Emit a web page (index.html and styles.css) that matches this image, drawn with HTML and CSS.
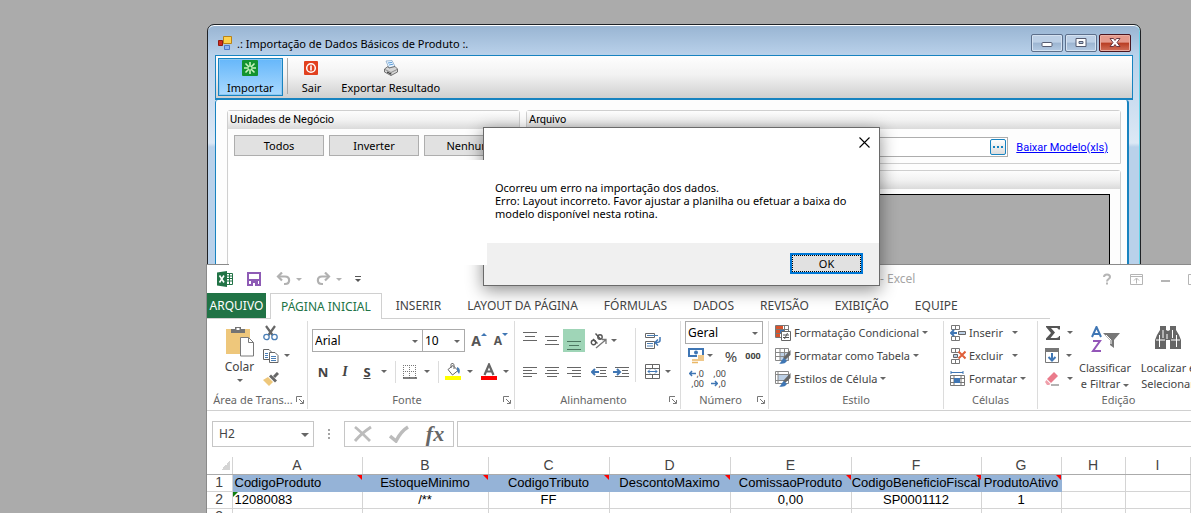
FILE: index.html
```html
<!DOCTYPE html>
<html lang="pt-BR">
<head>
<meta charset="utf-8">
<title>Importação de Dados Básicos de Produto</title>
<link rel="stylesheet" href="styles.css">
</head>
<body>
<main class="desktop">

  <section class="importer">
    <header class="titlebar">
      <svg width="14" height="14" viewBox="0 0 14 14"><path d="M5.500.5h8v7h-8z" fill="#ffd34e" stroke="#b98216"/><path d="M.5 4.500h4v5h-4z" fill="#d02a1c" stroke="#8e1b12"/><path d="M6.500 9.500h5v4h-5z" fill="#8fb4f3" stroke="#4d77c9"/></svg>
      <h1 class="title">.: Importação de Dados Básicos de Produto :.</h1>
      <div class="win-buttons">
        <button class="win-btn" aria-label="Minimizar"><svg width="12" height="10" viewBox="0 0 12 10"><rect x="1" y="4.500" width="10" height="4" rx="1" fill="#fff" stroke="#555b70"/></svg></button>
        <button class="win-btn" aria-label="Maximizar"><svg width="12" height="10" viewBox="0 0 12 10"><path d="M1 .5h10v8H1z" fill="#fff" stroke="#555b70"/><path d="M4 3.500h4v2H4z" fill="#aec3dd" stroke="#555b70"/></svg></button>
        <button class="win-btn win-close" aria-label="Fechar"><svg width="12" height="10" viewBox="0 0 12 10"><path d="M1 .5h3.500L6 2.500 7.500.5H11L8 4.500l3 4H7.500L6 6.500l-1.500 2H1l3-4z" fill="#fff" stroke="#5c2a35" stroke-width=".9"/></svg></button>
      </div>
    </header>
    <nav class="toolbar">
      <button class="tool tool-active"><svg width="16" height="16" viewBox="0 0 16 16"><rect width="16" height="16" rx="1" fill="#12932f"/><path d="M8 2v12M2 8h12M3.500 3.500l9 9M12.500 3.500l-9 9" stroke="#c9f5bd" stroke-width="1.600"/><circle cx="8" cy="8" r="1.500" fill="#12932f"/></svg>Importar</button>
      <span class="tool-sep"></span>
      <button class="tool"><svg width="16" height="16" viewBox="0 0 16 16"><rect x="1" y="1" width="14" height="14" rx="1" fill="#e2411f"/><circle cx="8" cy="8" r="4.300" fill="none" stroke="#fff" stroke-width="1.500"/><path d="M8 5.500v5" stroke="#fff" stroke-width="1.600"/></svg>Sair</button>
      <button class="tool"><svg width="16" height="16" viewBox="0 0 16 16"><path d="M3 1l6-.5 3 6-6 1.500z" fill="#e8f4ff" stroke="#8aa9c8" stroke-width=".8"/><path d="M5 3l4-.6M6 5l4-.8" stroke="#5fa0db"/><path d="M1.500 9L5 6.500l1 1.500 6-1.500 2.500 2.500v3L8 15.500 1.500 12z" fill="#d6d6d6" stroke="#666" stroke-width=".9"/><path d="M2 9.500l6 3 6-3M8 12.500v3" fill="none" stroke="#777" stroke-width=".8"/><path d="M4 12l4 2" stroke="#222"/></svg>Exportar Resultado</button>
    </nav>
    <div class="panel">
      <section class="box units">
        <h2 class="box-title">Unidades de Negócio</h2>
        <div class="unit-buttons"><button class="btn">Todos</button><button class="btn">Inverter</button><button class="btn">Nenhum</button></div>
      </section>
      <div class="right-col">
        <section class="box">
          <h2 class="box-title"><label for="file">Arquivo</label></h2>
          <div class="file-row">
            <div class="file-field"><input id="file" type="text"><button class="browse" aria-label="Procurar"><i></i><i></i><i></i></button></div>
            <a class="link" href="#">Baixar Modelo(xls)</a>
          </div>
        </section>
        <section class="box results">
          <h2 class="box-title"></h2>
          <div class="result-area"></div>
        </section>
      </div>
    </div>
  </section>

  <section class="excel">
    <header class="quick">
      <svg width="16" height="16" viewBox="0 0 16 16"><path d="M9 2.500h6.500v11H9z" fill="#fff" stroke="#217346"/><path d="M10 5h5M10 7.500h5M10 10h5M12.500 3v10" stroke="#217346"/><path d="M0 1.500L10 0v16L0 14.500z" fill="#217346"/><path d="M2.500 4.500l4.500 7M7 4.500l-4.500 7" stroke="#fff" stroke-width="1.600"/></svg>
      <svg class="save" width="14" height="14" viewBox="0 0 14 14"><path d="M1 1h12v12H1z" fill="#fff" stroke="#8e5bb5" stroke-width="2"/><path d="M1 7h12v2H1zM4 9h7v4H4z" fill="#8e5bb5"/><path d="M6 11h2v3H6z" fill="#fff"/></svg>
      <svg class="undo" width="15" height="14" viewBox="0 0 15 14"><path d="M2 4.500h7c5.500 0 5.500 7.500 0 7.500H8" fill="none" stroke="#b1b1b1" stroke-width="2.200"/><path d="M6 .5l-4 4 4 4" fill="none" stroke="#b1b1b1" stroke-width="2.200"/></svg>
      <i class="caret pale"></i>
      <svg class="redo" width="15" height="14" viewBox="0 0 15 14"><path d="M13 4.500H6c-5.500 0-5.500 7.500 0 7.500h1" fill="none" stroke="#b1b1b1" stroke-width="2.200"/><path d="M9 .5l4 4-4 4" fill="none" stroke="#b1b1b1" stroke-width="2.200"/></svg>
      <i class="caret pale"></i>
      <svg class="more" width="6" height="6" viewBox="0 0 6 6"><path d="M0 .5h6" stroke="#555"/><path d="M0 3h6L3 6z" fill="#555"/></svg>
      <span class="doc-title">- Excel</span>
      <div class="sys">
        <svg width="10" height="12" viewBox="0 0 10 12"><path d="M2 4c0-3.500 6-3.500 6 0 0 2-3 2-3 4.500" fill="none" stroke="#b5b5b5" stroke-width="2"/><path d="M4 9.500h2v2H4z" fill="#b5b5b5"/></svg>
        <svg width="13" height="11" viewBox="0 0 13 11"><path d="M.5.5h12v10H.5zM.5 2.500h12M6.500 9.500v-5M4 6.500L6.500 4 9 6.500" fill="none" stroke="#b5b5b5"/></svg>
        <svg width="9" height="11" viewBox="0 0 9 11"><path d="M0 7h9" stroke="#b5b5b5" stroke-width="2"/></svg>
        <svg width="9" height="11" viewBox="0 0 9 11"><path d="M.5.5h8v10h-8z" fill="none" stroke="#b5b5b5"/></svg>
      </div>
    </header>
    <nav class="tabs">
      <button class="tab-file">ARQUIVO</button><button class="tab tab-on">PÁGINA INICIAL</button><button class="tab">INSERIR</button><button class="tab">LAYOUT DA PÁGINA</button><button class="tab">FÓRMULAS</button><button class="tab">DADOS</button><button class="tab">REVISÃO</button><button class="tab">EXIBIÇÃO</button><button class="tab">EQUIPE</button>
    </nav>

    <div class="ribbon">
      <section class="group g-clip">
        <div class="body">
          <button class="big"><svg width="28" height="31" viewBox="0 0 28 31"><path d="M0 3h24v25H0z" fill="#eec77b"/><path d="M5 3h4V1h6v2h4v4H5z" fill="#737373"/><path d="M10.500 2h3v2h-3z" fill="#fff"/><path d="M14.500 11.500h8l5 5v13.500h-13z" fill="#fff" stroke="#7a7a7a"/><path d="M22.500 11.500v5h5" fill="none" stroke="#7a7a7a"/></svg><span>Colar</span><i class="caret"></i></button>
          <div class="clip-list">
            <button class="ic"><svg width="15" height="16" viewBox="0 0 15 16"><path d="M3 1l6.500 9M12 1L5.500 10" stroke="#666" stroke-width="2.200"/><circle cx="3.500" cy="12" r="2.700" fill="none" stroke="#4a7eb5" stroke-width="1.300"/><circle cx="11.500" cy="12" r="2.700" fill="none" stroke="#4a7eb5" stroke-width="1.300"/></svg></button>
            <button class="ic"><svg width="16" height="14" viewBox="0 0 16 14"><path d="M.5.500H6l3 3v7H.5z" fill="#fff" stroke="#666"/><path d="M2 4.500h3M2 6.500h3M2 8.500h3" stroke="#4a7eb5"/><path d="M6.500 3.500H12l3 3v7H6.500z" fill="#fff" stroke="#666"/><path d="M8 7.500h5M8 9.500h5M8 11.500h5" stroke="#4a7eb5"/></svg><i class="caret"></i></button>
            <button class="ic"><svg width="16" height="14" viewBox="0 0 16 14"><path d="M0 8l5-3 5 5-4 4z" fill="#eec77b"/><path d="M6 4.500l2-2 6 6-2 2z" fill="#666"/><path d="M11 5l4-4" stroke="#666" stroke-width="3"/></svg></button>
          </div>
        </div>
        <footer class="cap"><span>Área de Trans...</span><svg class="launch" width="8" height="8" viewBox="0 0 8 8"><path d="M.5 6V.5H6" fill="none" stroke="#777"/><path d="M3 3l4 4M7.500 4v3.500H4" fill="none" stroke="#777"/></svg></footer>
      </section>

      <section class="group g-font">
        <div class="body rows2">
          <div class="row">
            <span class="pick font-name"><select aria-label="Fonte"><option>Arial</option></select></span><span class="pick font-size"><select aria-label="Tamanho"><option>10</option></select></span>
            <button class="ic grow">A<i class="up"></i></button><button class="ic shrink">A<i class="down"></i></button>
          </div>
          <div class="row letters">
            <button class="ic"><b>N</b></button><button class="ic"><em>I</em></button><button class="ic"><u>S</u></button><i class="caret"></i><span class="vsep"></span>
            <button class="ic"><svg width="14" height="14" viewBox="0 0 14 14"><path d="M.5 0v13M6.500 0v13M12.500 0v13M0 .5h13M0 6.500h13" fill="none" stroke="#777" stroke-dasharray="1 1"/><path d="M0 13h14" stroke="#555" stroke-width="1.500"/></svg></button><i class="caret"></i><span class="vsep"></span>
            <button class="ic"><svg width="16" height="17" viewBox="0 0 16 17"><path d="M3 6.500l5-4 5 5-5.500 4.500z" fill="#fff" stroke="#666"/><path d="M6 5V1.500C6 0 9 0 9 2v4" fill="none" stroke="#666"/><path d="M12 4c3 1 3.500 4 2 7l-2-3z" fill="#4a7eb5"/><path d="M0 13h16v4H0z" fill="#ff0"/></svg></button><i class="caret"></i>
            <button class="ic"><svg width="16" height="17" viewBox="0 0 16 17"><path d="M3.500 12L8 1.500 12.500 12M5 8.500h6" fill="none" stroke="#666" stroke-width="2.200"/><path d="M0 13h16v4H0z" fill="red"/></svg></button><i class="caret"></i>
          </div>
        </div>
        <footer class="cap"><span>Fonte</span><svg class="launch" width="8" height="8" viewBox="0 0 8 8"><path d="M.5 6V.5H6" fill="none" stroke="#777"/><path d="M3 3l4 4M7.500 4v3.500H4" fill="none" stroke="#777"/></svg></footer>
      </section>

      <section class="group g-align">
        <div class="body">
          <div class="rows2">
            <div class="row">
              <button class="ic"><svg width="14" height="20" viewBox="0 0 14 20"><path d="M0 1.500h14M2 5.500h10M0 9.500h14" stroke="#666"/></svg></button>
              <button class="ic"><svg width="14" height="20" viewBox="0 0 14 20"><path d="M0 5.500h14M2 9.500h10M0 13.500h14" stroke="#666"/></svg></button>
              <button class="ic pressed"><svg width="14" height="20" viewBox="0 0 14 20"><path d="M0 10.500h14M2 14.500h10M0 18.500h14" stroke="#4c7660"/></svg></button>
              <button class="ic ab"><svg width="18" height="16" viewBox="0 0 18 16"><circle cx="3.500" cy="9.500" r="2.200" fill="none" stroke="#555" stroke-width="1.400"/><path d="M3 6l4.500 4.500M5.500.5l5 5.500" stroke="#555" stroke-width="1.400"/><circle cx="10" cy="4" r="2.200" fill="none" stroke="#555" stroke-width="1.400"/><path d="M6 15l9.500-8M12 6.500h4V11" fill="none" stroke="#777" stroke-width="1.300"/></svg></button><i class="caret"></i>
            </div>
            <div class="row">
              <button class="ic"><svg width="14" height="12" viewBox="0 0 14 12"><path d="M0 1.500h14M0 4.500h9M0 7.500h14M0 10.500h9" stroke="#666"/></svg></button>
              <button class="ic"><svg width="14" height="12" viewBox="0 0 14 12"><path d="M0 1.500h14M2 4.500h10M0 7.500h14M2 10.500h10" stroke="#666"/></svg></button>
              <button class="ic"><svg width="14" height="12" viewBox="0 0 14 12"><path d="M0 1.500h14M5 4.500h9M0 7.500h14M5 10.500h9" stroke="#666"/></svg></button>
              <button class="ic ab"><svg width="17" height="12" viewBox="0 0 17 12"><path d="M5 1.500h11M9 4.500h6M9 7.500h6M5 10.500h11" stroke="#666"/><path d="M1 6h7M4 3L1 6l3 3" fill="none" stroke="#3f76b4" stroke-width="2"/></svg></button>
              <button class="ic"><svg width="17" height="12" viewBox="0 0 17 12"><path d="M2 1.500h14M9 4.500h6M9 7.500h7M2 10.500h14" stroke="#666"/><path d="M0 6h7M4 3l3 3-3 3" fill="none" stroke="#3f76b4" stroke-width="2"/></svg></button>
            </div>
          </div>
          <span class="vsep tall"></span>
          <div class="rows2">
            <div class="row"><button class="ic"><svg width="16" height="16" viewBox="0 0 16 16"><path d="M.5.5h9v4h-9zM.5 8.500h9v7h-9z" fill="#fff" stroke="#666"/><path d="M2 2.500h11M2 10.500h6M2 13h6" stroke="#4a7eb5"/><path d="M15 4v3.500c0 2-2 2-4 2M13 6.500l-3 3 3 3" fill="none" stroke="#3f76b4" stroke-width="1.500"/></svg></button></div>
            <div class="row"><button class="ic"><svg width="16" height="16" viewBox="0 0 16 16"><path d="M.5.5h14v14H.5zM.5 4.500h14M.5 10.500h14M7.500.5v4M7.500 10.500v4" fill="none" stroke="#666"/><path d="M3 7.500h9M5 5.500l-2 2 2 2M10 5.500l2 2-2 2" fill="none" stroke="#3f76b4"/></svg></button><i class="caret"></i></div>
          </div>
        </div>
        <footer class="cap"><span>Alinhamento</span><svg class="launch" width="8" height="8" viewBox="0 0 8 8"><path d="M.5 6V.5H6" fill="none" stroke="#777"/><path d="M3 3l4 4M7.500 4v3.500H4" fill="none" stroke="#777"/></svg></footer>
      </section>

      <section class="group g-num">
        <div class="body rows3">
          <div class="row"><span class="pick number-format"><select aria-label="Formato de número"><option>Geral</option></select></span></div>
          <div class="row">
            <button class="ic"><svg width="17" height="16" viewBox="0 0 17 16"><path d="M1 1h14v7H1z" fill="#fff" stroke="#3f76b4" stroke-width="2"/><circle cx="8" cy="4.500" r="2" fill="#3f76b4"/><path d="M9 7h8v7H9z" fill="#fff"/><path d="M10 8h6M10 10h6M10 12h6M4 12h6M4 14.500h6" stroke="#eab765" stroke-width="1.500"/></svg></button><i class="caret"></i><button class="ic pct">%</button><button class="ic zeros">000</button>
          </div>
          <div class="row">
            <button class="ic dec"><span><svg width="7" height="7" viewBox="0 0 7 7"><path d="M0 3.500h7M3 1L.8 3.500 3 6" fill="none" stroke="#3f76b4" stroke-width="1.500"/></svg>,0</span><span>,00</span></button>
            <button class="ic dec"><span>,00</span><span><svg width="7" height="7" viewBox="0 0 7 7"><path d="M0 3.500h7M4 1l2.200 2.500L4 6" fill="none" stroke="#3f76b4" stroke-width="1.500"/></svg>,0</span></button>
          </div>
        </div>
        <footer class="cap"><span>Número</span><svg class="launch" width="8" height="8" viewBox="0 0 8 8"><path d="M.5 6V.5H6" fill="none" stroke="#777"/><path d="M3 3l4 4M7.500 4v3.500H4" fill="none" stroke="#777"/></svg></footer>
      </section>

      <section class="group g-style">
        <div class="body rows3">
          <button class="line"><svg width="16" height="16" viewBox="0 0 16 16"><path d="M.5.5h13v12H.5zM.5 4.500h13M.5 8.500h13M9.500.5v12" fill="#fff" stroke="#777"/><path d="M1 1h7v3H1zM1 9h4v3H1z" fill="#d9532c"/><path d="M1 5h4v3H1z" fill="#d9532c"/><path d="M5 5h4v3H5z" fill="#3f76b4"/><path d="M6.500 6.500h9v9h-9z" fill="#fff" stroke="#666"/><path d="M8 10h6M8 12.500h6M12.500 8l-3 6" stroke="#555"/></svg>Formatação Condicional<i class="caret"></i></button>
          <button class="line"><svg width="16" height="16" viewBox="0 0 16 16"><path d="M.5.5h13v12H.5z" fill="#fff"/><path d="M5 4h9v9H5z" fill="#bdd0e6"/><path d="M.5.5h13v12H.5zM.5 4.500h13M.5 8.500h13M5 .5v12M9.500.5v12" fill="none" stroke="#888"/><path d="M15.500 2v5L10 12l-2-2z" fill="#666"/><path d="M9 10l3 3c-2 3-5 3-8 2.500 2-.5 2.500-4 5-5.500z" fill="#3f76b4"/></svg>Formatar como Tabela<i class="caret"></i></button>
          <button class="line"><svg width="16" height="16" viewBox="0 0 16 16"><path d="M.5.5h13v12H.5z" fill="#fff"/><path d="M3 4h10v5H3z" fill="#bdd0e6"/><path d="M.5.5h13v12H.5zM.5 3.500h13M.5 9.500h13M3 .5v12" fill="none" stroke="#888"/><path d="M15.500 2v5L10 12l-2-2z" fill="#666"/><path d="M9 10l3 3c-2 3-5 3-8 2.500 2-.5 2.500-4 5-5.500z" fill="#3f76b4"/></svg>Estilos de Célula<i class="caret"></i></button>
        </div>
        <footer class="cap"><span>Estilo</span></footer>
      </section>

      <section class="group g-cells">
        <div class="body rows3">
          <button class="line wide"><svg width="16" height="16" viewBox="0 0 16 16"><path d="M1.500.5h8v4h-8zM1.500 11.500h8v4h-8zM5.500.5v4M5.500 11.500v4" fill="#fff" stroke="#777"/><path d="M8.500 6.500h7v3h-7z" fill="#bdd0e6" stroke="#666"/><path d="M1 8h6M4 5L1 8l3 3" fill="none" stroke="#3f76b4" stroke-width="2"/></svg>Inserir<i class="caret"></i></button>
          <button class="line wide"><svg width="16" height="16" viewBox="0 0 16 16"><path d="M1.500.5h8v4h-8zM1.500 11.500h8v4h-8zM5.500.5v4M5.500 11.500v4" fill="#fff" stroke="#777"/><path d="M3.500 6.500h4v3h-4z" fill="#bdd0e6" stroke="#666"/><path d="M8.500 3.500l7 7M15.500 3.500l-7 7" stroke="#e0603a" stroke-width="2"/></svg>Excluir<i class="caret"></i></button>
          <button class="line"><svg width="16" height="16" viewBox="0 0 16 16"><path d="M1 1.500h12M1 0v3M13 0v3" stroke="#3f76b4"/><path d="M.5 4.500h14v10H.5zM.5 7.500h14M.5 11.500h14M4 4.500v10M11 4.500v10" fill="#fff" stroke="#777"/><path d="M4 7h6v5H4z" fill="#3f76b4"/></svg>Formatar<i class="caret"></i></button>
        </div>
        <footer class="cap"><span>Células</span></footer>
      </section>

      <section class="group g-edit">
        <div class="body">
          <div class="rows3 edit-list">
            <button class="ic"><svg width="16" height="16" viewBox="0 0 16 16"><path d="M1 1h14v3.500h-1.500C13 3 12 3 6 3l4 4.500L5.500 13c7 0 8 0 8.500-2h1v4H1v-1.500L6 8 1 2z" fill="#555"/></svg><i class="caret"></i></button>
            <button class="ic"><svg width="15" height="16" viewBox="0 0 15 16"><path d="M.5.5h13v14H.5z" fill="#fff" stroke="#777"/><path d="M0 0h14v4H0z" fill="#777"/><path d="M7 5v7M3.500 9L7 12.500 10.500 9" fill="none" stroke="#3f76b4" stroke-width="2"/></svg><i class="caret"></i></button>
            <button class="ic"><svg width="16" height="14" viewBox="0 0 16 14"><path d="M9 0l4 4-7 7-4-4z" fill="#ea7b8b"/><path d="M1.500 8l4 4-1.500 1H2L0 10z" fill="#f0a0ab"/><path d="M6 13h8" stroke="#666"/></svg><i class="caret"></i></button>
          </div>
          <button class="big sort"><svg width="29" height="27" viewBox="0 0 29 27"><path d="M1 11L5.500 1 10 11M3 8h5" fill="none" stroke="#3f76b4" stroke-width="2"/><path d="M2 15h7l-7 10h8" fill="none" stroke="#9356b8" stroke-width="2"/><path d="M12 7h17l-6 7v8l-4-3v-5z" fill="#777"/><path d="M15 9l5 5v4" fill="none" stroke="#fff"/></svg><span>Classificar<br>e Filtrar <i class="caret"></i></span></button>
          <button class="big find"><svg width="26" height="23" viewBox="0 0 26 23"><path d="M5 0h6v4l2 1 2-1V0h6v4l3 5 2 5v9H15v-9h-4v9H0v-9l2-5 3-5z" fill="#666"/><path d="M4.500 9v12M8 4v8M17.500 4v8M21.500 9v12M12 8v5M1 14h9M16 14h9" stroke="#fff" fill="none"/></svg><span>Localizar e<br>Selecionar</span></button>
        </div>
        <footer class="cap"><span>Edição</span></footer>
      </section>
    </div>

    <div class="formula">
      <span class="pick name-box"><select aria-label="Caixa de nome"><option>H2</option></select></span>
      <span class="dots"><i></i><i></i><i></i></span>
      <div class="fx">
        <button class="ic" aria-label="Cancelar"><svg width="20" height="18" viewBox="0 0 20 18"><path d="M2 2c5 4 10 9 15 14M18 2C12 6 7 10 2 16" stroke="#bcbcbc" stroke-width="2.800" fill="none"/></svg></button>
        <button class="ic" aria-label="Inserir"><svg width="20" height="18" viewBox="0 0 20 18"><path d="M1 11l6 5C10 10 14 5 19 2" stroke="#bcbcbc" stroke-width="3.500" fill="none"/></svg></button>
        <button class="ic fx-label" aria-label="Inserir função">fx</button>
      </div>
      <input class="formula-input" type="text" aria-label="Fórmula">
    </div>

    <table class="sheet">
      <colgroup><col class="c0"><col class="cA"><col class="cB"><col class="cC"><col class="cC"><col class="cC"><col class="cA"><col class="cG"><col class="cH"><col class="cI"><col></colgroup>
      <thead><tr><th class="corner"></th><th>A</th><th>B</th><th>C</th><th>D</th><th>E</th><th>F</th><th>G</th><th>H</th><th>I</th><th></th></tr></thead>
      <tbody>
        <tr class="heads"><th>1</th><td class="note left">CodigoProduto</td><td class="note">EstoqueMinimo</td><td class="note">CodigoTributo</td><td class="note">DescontoMaximo</td><td class="note">ComissaoProduto</td><td class="note">CodigoBeneficioFiscal</td><td class="note">ProdutoAtivo</td><td></td><td></td><td></td></tr>
        <tr><th>2</th><td class="left textual">12080083</td><td>/**</td><td>FF</td><td></td><td>0,00</td><td>SP0001112</td><td>1</td><td></td><td></td><td></td></tr>
        <tr><th>3</th><td></td><td></td><td></td><td></td><td></td><td></td><td></td><td></td><td></td><td></td></tr>
      </tbody>
    </table>
  </section>

  <section class="dialog" role="alertdialog" aria-describedby="msg">
    <button class="dlg-close" aria-label="Fechar"><svg width="11" height="11" viewBox="0 0 11 11"><path d="M.5.5l10 10M10.500.5l-10 10" stroke="#000" stroke-width="1.100"/></svg></button>
    <p class="msg" id="msg">Ocorreu um erro na importação dos dados.<br>Erro: Layout incorreto. Favor ajustar a planilha ou efetuar a baixa do modelo disponível nesta rotina.</p>
    <footer class="dlg-foot"><button class="ok">OK</button></footer>
  </section>
  <div class="blank"></div>
</main>
</body>
</html>
```

FILE: styles.css
```css
* { box-sizing: border-box; }
body { margin: 0; background: #fff; font: 11px/13px "Noto Sans", "Open Sans", sans-serif; color: #000; }
button { border: 0; padding: 0; margin: 0; background: none; font: inherit; color: inherit; white-space: nowrap; }
h1, h2, p { margin: 0; font: inherit; }
input, select { font: inherit; color: inherit; }
svg { display: block; flex: none; }

.desktop { position: relative; height: 100vh; margin-right: 10px; background: #ababab; overflow: hidden; }

/* Import window */
.importer { position: absolute; left: 207px; right: 50px; top: 24px; bottom: 0; display: flex; flex-direction: column; padding: 0 7px; border: 1px solid #1f2226; border-radius: 7px 7px 0 0; box-shadow: inset 0 1px #fff, inset -1px 0 #63d3e8; background: linear-gradient(#98b4d2, #b9d1ea 30px, #dce8f5 118px, #b9d1ea 122px); }
.titlebar { display: flex; align-items: center; gap: 5px; height: 30px; padding: 6px 2px 0 3px; }
.title { flex: 1; }
.win-buttons { display: flex; gap: 2px; }
.win-btn { display: flex; align-items: center; justify-content: center; width: 32px; height: 18px; border: 1px solid #5c6f8b; border-radius: 2px; box-shadow: inset 0 0 0 1px #d5e2f1; background: linear-gradient(#bdd0e6 45%, #9cb5d1 50%, #b4cae3); }
.win-close { border-color: #4b1620; box-shadow: inset 0 0 0 1px #eaaea2; background: linear-gradient(#e59a8c 45%, #b83d22 50%, #d2705a); }
.toolbar { display: flex; height: 45px; padding: 2px; border: 1px solid #1883c0; border-bottom-width: 2px; background: linear-gradient(#fefefe, #f2f2f2 45%, #cfcfcf); }
.tool { display: flex; flex-direction: column; align-items: center; gap: 4px; padding: 2px 10px 0; line-height: 16px; }
.tool-active { padding: 1px 8px 0; border: 1px solid #1883c0; outline: 1px solid #8dc8f2; outline-offset: -2px; background: linear-gradient(#66b7fa, #a9d9ff); }
.tool-sep { width: 1px; margin: 0 4px 2px 4px; background: #aaa; }
.panel { flex: 1; display: flex; gap: 6px; margin-right: 4px; padding: 10px 6px 0 11px; border-right: 2px solid #1883c0; border-left: 1px solid #1883c0; border-radius: 3px 3px 0 0; background: #fdfdfd; }
.box { border: 1px solid #cfcfcf; border-radius: 3px 3px 0 0; background: #fdfdfd; }
.box-title { height: 18px; padding: 2px 2px 0; background: linear-gradient(#fdfdfd, #f2f2f2 50%, #dadada); font-family: Roboto, sans-serif; }
.units { flex: 0 0 293px; }
.unit-buttons { display: flex; gap: 5px; padding: 6px 5px 0 6px; }
.btn { flex: 1; height: 21px; border: 1px solid #adadad; background: #e1e1e1; }
.right-col { flex: 1; display: flex; flex-direction: column; gap: 6px; }
.file-row { display: flex; align-items: center; gap: 8px; padding: 8px 12px 6px; }
.file-field { flex: 1; display: flex; height: 20px; padding: 1px; border: 1px solid #adadad; background: #fff; }
.file-field input { flex: 1; min-width: 0; border: 0; }
.browse { display: flex; align-items: center; justify-content: center; gap: 2px; width: 16px; border: 1px solid #1883c0; border-radius: 2px; background: linear-gradient(#fff, #ddd); }
.browse i { width: 2px; height: 2px; background: #1883c0; }
.link { color: #00f; font-family: Roboto, sans-serif; }
.results { flex: 1; display: flex; flex-direction: column; }
.result-area { flex: 1; margin: 5px 10px 0; border: 1px solid #000; background: #ababab; }

/* Spreadsheet window */
.excel { position: absolute; left: 206px; right: 0; top: 264px; bottom: 0; display: flex; flex-direction: column; border: 1px solid #8a8a8a; border-width: 1px 0 0 1px; background: #fff; color: #444; font-size: 12px; line-height: 16px; overflow: hidden; }
.excel > * { flex-shrink: 0; }
.quick { display: flex; align-items: center; height: 28px; padding-left: 10px; }
.save { margin-left: 14px; }
.undo { margin: 0 5px 0 15px; }
.redo { margin: 0 5px 0 14px; }
.more { margin-left: 13px; }
.doc-title { margin-left: 519px; color: #a5a5a5; }
.sys { display: flex; align-items: center; gap: 18px; margin-left: auto; margin-right: -6px; }
.tabs { display: flex; height: 26px; background: linear-gradient(#d0d0d0, #d0d0d0) 0 100% / calc(100% - 141px) 1px no-repeat; }
.tab-file { width: 59px; height: 25px; margin-right: 4px; background: #217346; color: #fff; }
.tab { padding: 0 12px 0 14px; }
.tab-on { padding: 0 10px; border: 1px solid #d0d0d0; border-bottom: 0; background: #fff; color: #217346; }
.caret { flex: none; display: inline-block; vertical-align: middle; border: 3px solid transparent; border-top-color: #666; border-bottom: 0; }
.pale { border-top-color: #b1b1b1; }
.ribbon { display: flex; height: 92px; padding-top: 2px; border-bottom: 1px solid #d0d0d0; }
.group { flex: none; display: flex; flex-direction: column; height: 88px; border-right: 1px solid #dcdcdc; font-size: 11px; }
.body { flex: 1; display: flex; min-height: 0; }
.cap { display: flex; align-items: center; height: 16px; margin-bottom: 1px; padding: 0 3px; color: #666; }
.cap span { flex: 1; text-align: center; white-space: nowrap; }
.ic { display: flex; align-items: center; justify-content: center; width: 22px; height: 23px; }
.row { display: flex; align-items: center; height: 23px; }
.rows2 { display: flex; flex-direction: column; gap: 8px; padding-top: 8px; }
.rows3 { display: flex; flex-direction: column; }
.vsep { width: 1px; height: 22px; background: #dcdcdc; }
.tall { height: 54px; margin: 7px 6px 0 3px; }
.big { display: flex; flex-direction: column; align-items: center; }
.pick { position: relative; display: block; border: 1px solid #ababab; background: #fff; color: #000; font-size: 12px; }
.pick::after { content: ""; position: absolute; right: 4px; top: 50%; margin-top: -1px; border: 3px solid transparent; border-top-color: #666; border-bottom: 0; }
.pick select { width: 100%; height: 100%; padding: 0 2px; border: 0; background: none; appearance: none; }

.g-clip { width: 101px; }
.g-clip .big { width: 45px; margin-left: 9px; padding: 5px 0 0 2px; }
.g-clip .big span { font-size: 12px; line-height: 19px; }
.g-clip .big .caret { margin-top: 3px; }
.clip-list { display: flex; flex-direction: column; margin-left: 2px; }
.clip-list .ic { justify-content: flex-start; gap: 5px; width: 36px; }
.g-font { width: 207px; }
.g-font .body { padding-left: 4px; }
.font-name { width: 111px; height: 23px; }
.font-size { width: 43px; height: 23px; margin-left: -1px; }
.grow, .shrink { align-items: flex-start; color: #555; font: bold 14px/23px "Noto Sans", sans-serif; }
.grow { margin-left: 3px; }
.shrink { font-size: 12px; }
.up, .down { border: 3px solid transparent; margin-top: 4px; }
.up { border-bottom-color: #3f76b4; border-top: 0; }
.down { border-top-color: #3f76b4; border-bottom: 0; }
.letters b { font-size: 13px; }
.letters em { font: italic bold 14px "Liberation Serif", serif; }
.letters u { font-weight: bold; font-size: 13px; }
.letters .caret { margin: 0 5px 0 3px; }
.letters .vsep { margin: 0 3px; }
.g-align { width: 166px; }
.g-align .body { padding-left: 4px; }
.g-align .ic + .caret { margin-left: 1px; }
.ab { margin-left: 3px; }
.pressed { background: #9fd5b7; }
.g-num { width: 88px; }
.g-num .body { padding-left: 4px; }
.number-format { width: 78px; height: 23px; }
.pct { margin-left: 7px; font-size: 15px; }
.zeros { font-size: 9px; font-weight: bold; }
.dec { flex-direction: column; align-items: flex-end; padding-right: 3px; font-size: 9px; line-height: 10px; }
.dec span { display: flex; align-items: center; }
.g-style { width: 175px; }
.g-cells { width: 94px; }
.line { display: flex; align-items: center; gap: 3px; height: 23px; padding-left: 6px; }
.wide .caret { margin-left: 6px; }
.g-edit { flex: 1 0 152px; border-right: 0; }
.edit-list { width: 35px; padding-left: 7px; }
.edit-list .ic { justify-content: flex-start; gap: 6px; width: 28px; }
.sort { width: 64px; padding-top: 5px; }
.find { width: 62px; padding-top: 5px; }
.sort svg { margin-bottom: 7px; }
.find svg { margin-bottom: 11px; }

.formula { display: flex; align-items: center; height: 46px; }
.name-box { width: 102px; height: 26px; margin-left: 5px; color: #444; border-color: #c6c6c6; }
.name-box select { padding-left: 6px; }
.name-box::after { border-width: 4px 4px 0; }
.dots { display: flex; flex-direction: column; gap: 2px; margin: 0 14px; }
.dots i { width: 2px; height: 2px; background: #a5a5a5; }
.fx { display: flex; align-items: center; justify-content: space-around; width: 110px; height: 26px; border: 1px solid #c6c6c6; }
.fx-label { font: italic bold 22px/22px "Liberation Serif", serif; color: #666; }
.formula-input { flex: 1; height: 26px; margin-left: 3px; border: 1px solid #c6c6c6; border-right: 0; }

.sheet { table-layout: fixed; width: 100%; border-collapse: collapse; font: 13px/15px "Liberation Sans", Arial, sans-serif; color: #000; }
.sheet th { padding: 0; font-weight: normal; color: #444; border-right: 1px solid #d4d4d4; border-bottom: 1px solid #d4d4d4; }
.sheet thead th { height: 17px; font-size: 14px; border-bottom-color: #ababab; }
.sheet tbody th { font-size: 14px; }
.sheet td { position: relative; height: 17px; padding: 0; border: 1px solid #d4d4d4; text-align: center; white-space: nowrap; }
.sheet .left { text-align: left; padding-left: 2px; }
.sheet .note { background: #95b3d7; border-color: #95b3d7; }
.note::after { content: ""; position: absolute; right: 0; top: 0; border-top: 5px solid red; border-left: 5px solid transparent; }
.textual::before { content: ""; position: absolute; left: 0; top: 0; border-top: 5px solid #108010; border-right: 5px solid transparent; }
.corner { background: linear-gradient(135deg, transparent 50%, #d4d4d4 50%) 14px 4px / 9px 9px no-repeat; }
.c0 { width: 25px; } .cA { width: 130px; } .cB { width: 126px; } .cC { width: 121px; } .cG { width: 80px; } .cH { width: 64px; } .cI { width: 65px; }

/* Message box */
.dialog { position: absolute; left: 483px; top: 127px; width: 397px; display: flex; flex-direction: column; border: 1px solid #6a6a6a; background: #fff; box-shadow: 0 4px 16px rgba(0, 0, 0, .45); }
.dlg-close { align-self: flex-end; margin: 9px 9px 0 0; }
.msg { padding: 33px 26px 23px 11px; }
.dlg-foot { display: flex; justify-content: flex-end; padding: 10px 16px 11px; background: #f0f0f0; }
.ok { width: 73px; height: 21px; border: 2px solid #0078d7; outline: 1px dotted #000; outline-offset: -3px; background: #e1e1e1; }
.blank { position: absolute; left: 229px; top: 160px; width: 258px; height: 105px; background: #fff; }
```
